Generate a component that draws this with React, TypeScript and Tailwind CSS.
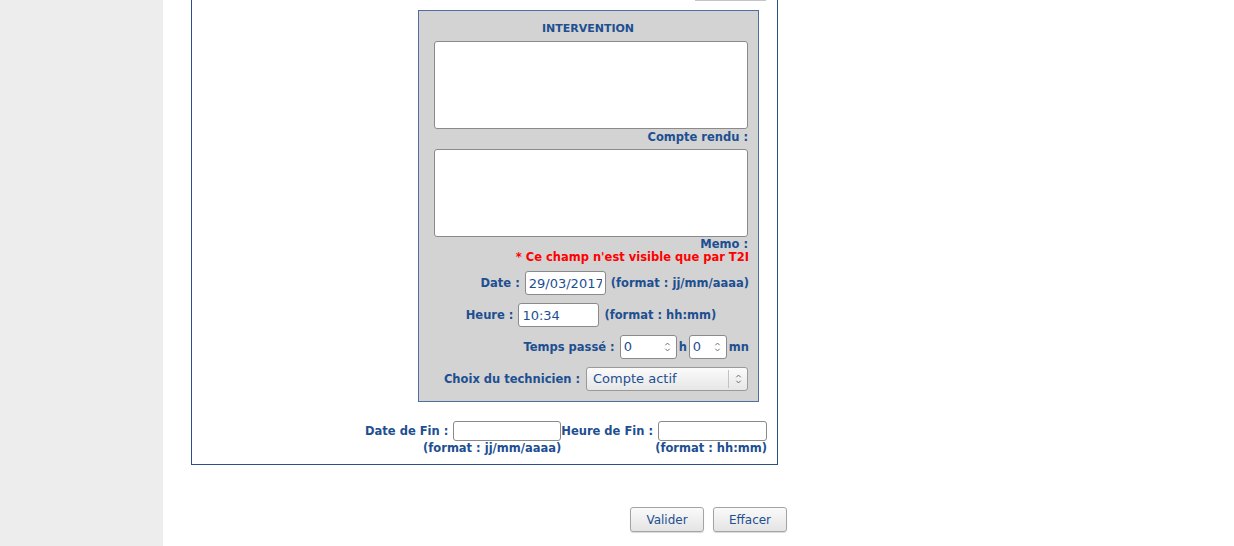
const label = "font-['DejaVu_Sans',sans-serif] font-bold text-[11.5px] text-[#1d4f91]";

const UpDown = ({ className }: { className?: string }) => (
  <svg viewBox="0 0 8 14" className={className} fill="none" stroke="#666" strokeWidth="1.1">
    <path d="M1.5 5 L4 2.5 L6.5 5" />
    <path d="M1.5 9 L4 11.5 L6.5 9" />
  </svg>
);

const NumberBox = ({ value, width }: { value: string; width: string }) => (
  <div className={`relative h-[24px] ${width} bg-white border border-[#8a8a8a] rounded-[3px] flex items-center pl-[3px]`}>
    <span className="font-['DejaVu_Sans',sans-serif] text-[13px] text-[#1d4f91]">{value}</span>
    <UpDown className="absolute right-[5px] top-[4px] w-[7px] h-[14px]" />
  </div>
);

const TextBox = ({ value, className }: { value?: string; className: string }) => (
  <input
    readOnly
    value={value ?? ""}
    className={`bg-white border border-[#8a8a8a] rounded-[3px] px-[3px] font-['DejaVu_Sans',sans-serif] text-[13px] text-[#1d4f91] outline-none ${className}`}
  />
);

export default function App() {
  return (
    <div className="flex h-[546px] w-[1234px] overflow-hidden bg-white">
      <div className="w-[163px] shrink-0 bg-[#ededed]" />
      <div className="flex flex-col pl-[28px]">
        <div className="w-[587px] border border-t-0 border-[#2b5089] pb-[9px]">
          <div className="ml-[503px] h-[1px] w-[71px] bg-[#c4c4c4]" />
          <div className="ml-[226px] mt-[9px] w-[341px] border border-[#4c6f9f] bg-[#d3d3d3] pl-[15px] pr-[10px] pt-[11px] pb-[10px]">
            <div className={`${label} !text-[11px] text-center leading-[14px] pr-[6px]`}>INTERVENTION</div>
            <textarea className="mt-[5px] block h-[88px] w-[314px] resize-none rounded-[3px] border border-[#8a8a8a] bg-white outline-none" />
            <div className={`${label} text-right leading-[14px] pt-[1px]`}>Compte rendu :</div>
            <textarea className="mt-[5px] block h-[88px] w-[314px] resize-none rounded-[3px] border border-[#8a8a8a] bg-white outline-none" />
            <div className={`${label} text-right leading-[13px] pt-[1px]`}>Memo :</div>
            <div className="font-['DejaVu_Sans',sans-serif] font-bold text-[11.5px] text-[#ff0000] text-right leading-[13px] -mr-[1px]">
              * Ce champ n'est visible que par T2I
            </div>

            <div className="mt-[7px] flex items-center justify-end gap-[5px] -mr-[1px]">
              <span className={`${label} pt-[2px]`}>Date :</span>
              <TextBox value="29/03/2017" className="h-[24px] w-[81px]" />
              <span className={`${label} pt-[2px]`}>(format : jj/mm/aaaa)</span>
            </div>

            <div className="mt-[8px] flex items-center justify-center gap-[5px]">
              <span className={`${label} pt-[2px]`}>Heure :</span>
              <TextBox value="10:34" className="h-[24px] w-[81px]" />
              <span className={`${label} pt-[2px]`}>(format : hh:mm)</span>
            </div>

            <div className="mt-[8px] flex items-center justify-end -mr-[1px]">
              <span className={`${label} mr-[5px] pt-[2px]`}>Temps passé :</span>
              <NumberBox value="0" width="w-[57px]" />
              <span className={`${label} mx-[2px] pt-[2px]`}>h</span>
              <NumberBox value="0" width="w-[38px]" />
              <span className={`${label} ml-[2px] pt-[2px]`}>mn</span>
            </div>

            <div className="mt-[8px] flex items-center justify-end gap-[6px]">
              <span className={`${label} pt-[2px]`}>Choix du technicien :</span>
              <div className="relative flex h-[24px] w-[162px] items-center rounded-[3px] border border-[#9a9a9a] bg-gradient-to-b from-[#fbfbfb] to-[#e6e6e6] pl-[6px]">
                <span className="font-['DejaVu_Sans',sans-serif] text-[13px] text-[#1d4f91]">Compte actif</span>
                <div className="absolute right-[18px] top-[2px] h-[18px] w-px bg-[#c2c2c2]" />
                <UpDown className="absolute right-[5px] top-[4px] w-[7px] h-[14px]" />
              </div>
            </div>
          </div>

          <div className="mt-[19px] flex justify-end pr-[10px]">
            <div className="text-right">
              <div className="flex items-center gap-[5px]">
                <span className={`${label} pt-[1px]`}>Date de Fin :</span>
                <TextBox className="h-[20px] w-[108px]" />
              </div>
              <div className={`${label} leading-[13px] pt-[1px]`}>(format : jj/mm/aaaa)</div>
            </div>
            <div className="text-right">
              <div className="flex items-center gap-[5px]">
                <span className={`${label} pt-[1px]`}>Heure de Fin :</span>
                <TextBox className="h-[20px] w-[109px]" />
              </div>
              <div className={`${label} leading-[13px] pt-[1px]`}>(format : hh:mm)</div>
            </div>
          </div>
        </div>

        <div className="ml-[439px] mt-[42px] flex gap-[9px]">
          {["Valider", "Effacer"].map((t) => (
            <button
              key={t}
              className="h-[25px] w-[74px] rounded-[3px] border border-[#a4a4a4] bg-gradient-to-b from-[#fafafa] to-[#e4e4e4] font-['DejaVu_Sans',sans-serif] text-[12px] text-[#1d4f91] shadow-[0_1px_1px_rgba(0,0,0,0.15)]"
            >
              {t}
            </button>
          ))}
        </div>
      </div>
    </div>
  );
}
